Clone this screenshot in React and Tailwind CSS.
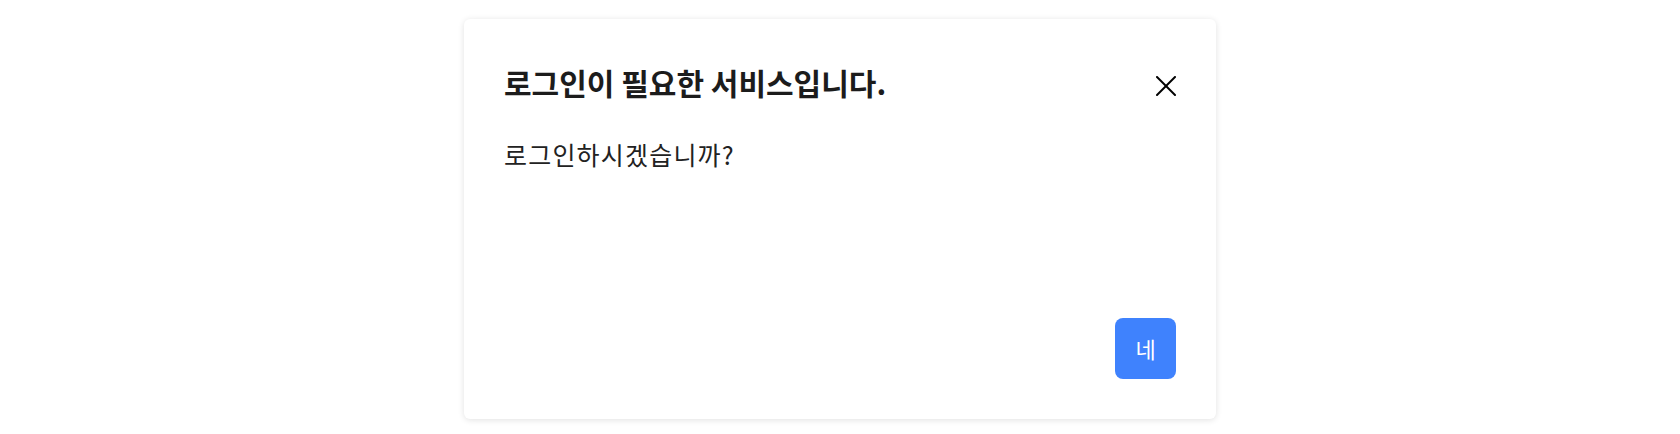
import React from 'react';

const LoginRequiredModal = () => {
  return (
    <div className="w-full min-h-screen bg-white pt-[19px]" style={{ fontFamily: '"Noto Sans CJK KR", "Noto Sans", sans-serif' }}>
      <div className="mx-auto w-[752px] h-[400px] bg-white rounded-md shadow-[0_1px_6px_rgba(0,0,0,0.12)] p-10 flex flex-col">
        {/* Header */}
        <div className="flex items-center justify-between h-[53px]">
          <h2 className="text-[30px] font-bold text-[#1c1c1c] leading-none pb-2">로그인이 필요한 서비스입니다.</h2>
          <button type="button" className="w-5 h-5 flex items-center justify-center text-black">
            <svg width="20" height="20" viewBox="0 0 20 20" fill="none" stroke="currentColor" strokeWidth="2" strokeLinecap="round">
              <path d="M1 1L19 19" />
              <path d="M19 1L1 19" />
            </svg>
          </button>
        </div>

        {/* Body */}
        <p className="mt-6 text-[25px] leading-[36px] tracking-[1.2px] text-[#222]">로그인하시겠습니까?</p>

        {/* Footer */}
        <div className="mt-auto flex justify-end">
          <button type="button" className="w-[61px] h-[61px] rounded-lg bg-[#3f82fd] text-white text-[22px]">
            네
          </button>
        </div>
      </div>
    </div>
  );
};

export default function App() {
  return <LoginRequiredModal />;
}
